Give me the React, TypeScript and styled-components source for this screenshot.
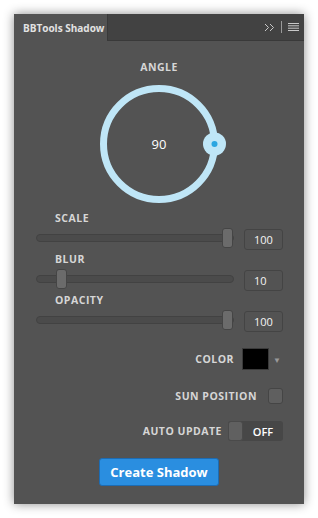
import styled, { createGlobalStyle } from "styled-components";

const GlobalStyle = createGlobalStyle`
    html, body {
        margin: 0;
        padding: 0;
        background: #ffffff;
    }
    body {
        font-family: "Open Sans", "Noto Sans", sans-serif;
    }
`;

const Page = styled.div`
    width: 318px;
    height: 518px;
    padding: 14px;
    box-sizing: border-box;
`;

const Panel = styled.div`
    width: 290px;
    height: 490px;
    background: #535353;
    box-shadow: 0 0 10px rgba(0, 0, 0, 0.45);
    display: flex;
    flex-direction: column;
`;

const Header = styled.div`
    height: 27px;
    display: flex;
    align-items: stretch;
    background: #424242;
`;

const Tab = styled.div`
    width: 94px;
    background: #535353;
    color: #e2e2e2;
    font-size: 10px;
    font-weight: 700;
    display: flex;
    align-items: center;
    padding-left: 9px;
    box-sizing: border-box;
    border-right: 1px solid #393939;
`;

const HeaderRest = styled.div`
    flex: 1;
    display: flex;
    align-items: center;
    justify-content: flex-end;
    gap: 6px;
    padding-right: 5px;
    border-bottom: 1px solid #393939;
`;

const Divider = styled.div`
    width: 1px;
    height: 12px;
    background: #9a9a9a;
`;

const Body = styled.div`
    flex: 1;
    display: flex;
    flex-direction: column;
    padding-top: 20px;
`;

const Label = styled.div`
    color: #d6d6d6;
    font-size: 10.5px;
    font-weight: 700;
    letter-spacing: 0.5px;
    line-height: 12px;
    white-space: nowrap;
`;

const AngleLabel = styled(Label)`
    text-align: center;
`;

const DialWrap = styled.div`
    display: flex;
    justify-content: center;
    margin-top: 10px;
`;

const Sliders = styled.div`
    display: flex;
    flex-direction: column;
    gap: 3px;
    margin-top: 7px;
    padding: 0 21px 0 22px;
`;

const SliderBlock = styled.div`
    display: flex;
    flex-direction: column;
    gap: 5px;
`;

const SliderLabel = styled(Label)`
    padding-left: 19px;
`;

const SliderRow = styled.div`
    display: flex;
    align-items: center;
    gap: 10px;
`;

const Track = styled.div`
    position: relative;
    flex: 1;
    height: 8px;
    margin-bottom: 4px;
    border-radius: 4px;
    background: #4b4b4b;
    border: 1px solid #424242;
    box-sizing: border-box;
`;

const Thumb = styled.div`
    position: absolute;
    top: 50%;
    width: 11px;
    height: 20px;
    margin-top: -10px;
    margin-left: -5px;
    border-radius: 3px;
    background: #6b6b6b;
    border: 1px solid #454545;
    box-sizing: border-box;
`;

const ValueBox = styled.div`
    width: 39px;
    height: 21px;
    border: 1px solid #444444;
    border-radius: 3px;
    box-sizing: border-box;
    color: #f4f4f4;
    font-size: 11px;
    line-height: 19px;
    padding-left: 9px;
`;

const Options = styled.div`
    display: flex;
    flex-direction: column;
    align-items: flex-end;
    padding-right: 21px;
    margin-top: 16px;
`;

const OptionRow = styled.div<{ $gap: number; $mt: number }>`
    display: flex;
    align-items: center;
    gap: ${(p) => p.$gap}px;
    margin-top: ${(p) => p.$mt}px;
`;

const Swatch = styled.div`
    width: 27px;
    height: 22px;
    background: #000000;
    border: 1px solid #3a3a3a;
    box-sizing: border-box;
`;

const Caret = styled.span`
    width: 12px;
    margin-left: -6px;
    text-align: center;
    color: #9a9a9a;
    font-size: 8px;
`;

const Checkbox = styled.div`
    width: 15px;
    height: 16px;
    border-radius: 3px;
    background: #5f5f5f;
    border: 1px solid #454545;
    box-sizing: border-box;
`;

const Toggle = styled.div`
    width: 55px;
    height: 20px;
    border-radius: 3px;
    background: #474747;
    display: flex;
    align-items: center;
`;

const ToggleKnob = styled.div`
    width: 15px;
    height: 20px;
    border-radius: 3px;
    background: #606060;
    border: 1px solid #4a4a4a;
    box-sizing: border-box;
`;

const ToggleText = styled.span`
    flex: 1;
    text-align: center;
    color: #ffffff;
    font-size: 11px;
    font-weight: 600;
`;

const ButtonRow = styled.div`
    display: flex;
    justify-content: center;
    margin-top: 17px;
`;

const CreateButton = styled.button`
    width: 120px;
    height: 28px;
    background: #2a8ee0;
    border: 1px solid #1c6cb4;
    border-radius: 3px;
    color: #ffffff;
    font-family: "Open Sans", "Noto Sans", sans-serif;
    font-size: 13px;
    font-weight: 700;
    cursor: pointer;
    padding: 0;
`;

const sliders = [
    { name: "SCALE", value: 100, pos: 97 },
    { name: "BLUR", value: 10, pos: 12 },
    { name: "OPACITY", value: 100, pos: 97 },
];

function Dial({ angle }: { angle: number }) {
    const cx = 70;
    const cy = 61;
    const r = 55.5;
    const rad = ((90 - angle) * Math.PI) / 180;
    const kx = cx + r * Math.cos(rad);
    const ky = cy - r * Math.sin(rad);
    return (
        <svg width="140" height="122" viewBox="0 0 140 122">
            <circle cx={cx} cy={cy} r={r} fill="none" stroke="#bfe6f7" strokeWidth="7" />
            <circle cx={kx} cy={ky} r="11.5" fill="#bfe6f7" />
            <circle cx={kx} cy={ky} r="3" fill="#2ba6e1" />
            <text
                x={cx}
                y={cy + 4.5}
                textAnchor="middle"
                fill="#ffffff"
                fontSize="13"
                fontFamily="Open Sans, sans-serif"
            >
                {angle}
            </text>
        </svg>
    );
}

export default function App() {
    return (
        <Page>
            <GlobalStyle />
            <Panel>
                <Header>
                    <Tab>BBTools Shadow</Tab>
                    <HeaderRest>
                        <svg width="11" height="9" viewBox="0 0 11 9">
                            <path d="M1 1l3.5 3.5L1 8M6 1l3.5 3.5L6 8" fill="none" stroke="#c8c8c8" strokeWidth="1" />
                        </svg>
                        <Divider />
                        <svg width="11" height="8" viewBox="0 0 11 8">
                            <path d="M0 0.5h11M0 2.8h11M0 5.2h11M0 7.5h11" stroke="#c8c8c8" strokeWidth="1" />
                        </svg>
                    </HeaderRest>
                </Header>
                <Body>
                    <AngleLabel>ANGLE</AngleLabel>
                    <DialWrap>
                        <Dial angle={90} />
                    </DialWrap>
                    <Sliders>
                        {sliders.map((s) => (
                            <SliderBlock key={s.name}>
                                <SliderLabel>{s.name}</SliderLabel>
                                <SliderRow>
                                    <Track>
                                        <Thumb style={{ left: `${s.pos}%` }} />
                                    </Track>
                                    <ValueBox>{s.value}</ValueBox>
                                </SliderRow>
                            </SliderBlock>
                        ))}
                    </Sliders>
                    <Options>
                        <OptionRow $gap={8} $mt={0}>
                            <Label>COLOR</Label>
                            <Swatch />
                            <Caret>▼</Caret>
                        </OptionRow>
                        <OptionRow $gap={11} $mt={18}>
                            <Label>SUN POSITION</Label>
                            <Checkbox />
                        </OptionRow>
                        <OptionRow $gap={6} $mt={17}>
                            <Label>AUTO UPDATE</Label>
                            <Toggle>
                                <ToggleKnob />
                                <ToggleText>OFF</ToggleText>
                            </Toggle>
                        </OptionRow>
                    </Options>
                    <ButtonRow>
                        <CreateButton>Create Shadow</CreateButton>
                    </ButtonRow>
                </Body>
            </Panel>
        </Page>
    );
}
